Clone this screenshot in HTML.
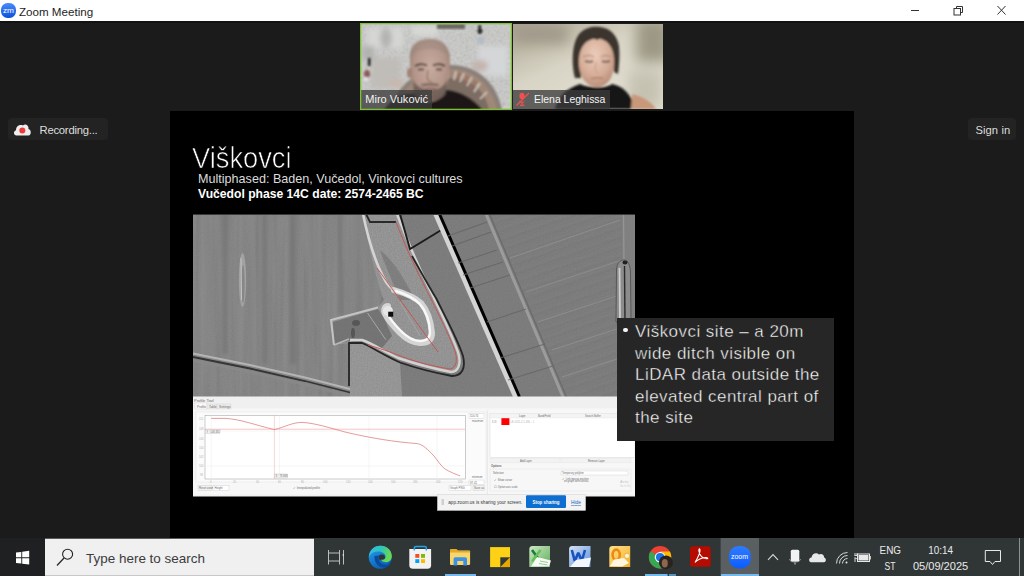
<!DOCTYPE html>
<html><head><meta charset="utf-8">
<style>
*{margin:0;padding:0;box-sizing:border-box}
html,body{width:1024px;height:576px;overflow:hidden;background:#1b1b1b;font-family:"Liberation Sans",sans-serif}
.abs{position:absolute}
#titlebar{left:0;top:0;width:1024px;height:21px;background:#fff}
#tline{left:0;top:21px;width:1024px;height:2px;background:#121212}
#zmicon{left:1px;top:3px;width:15px;height:15px;border-radius:50%;background:linear-gradient(160deg,#3d7bff,#0b4fe0)}
#zmicon span{position:absolute;left:2px;top:3px;color:#fff;font-size:7px;font-weight:bold;letter-spacing:-0.3px}
#ttext{left:19px;top:5px;font-size:11.6px;color:#1e1e1e}
#slide{left:170px;top:111px;width:684px;height:427px;background:#000}
#tile1{left:360px;top:23px;width:152px;height:87px;border:2px solid #7cc334;background:#b9b9b5;overflow:hidden}
#tile2{left:513px;top:24px;width:150px;height:85px;background:#bcb9ab;overflow:hidden}
.rec{left:8px;top:118px;width:100px;height:22px;border-radius:4px;background:#232323}
.sign{left:968px;top:118px;width:48px;height:22px;border-radius:4px;background:#232323}
#taskbar{left:0;top:538px;width:1024px;height:38px;background:#283135}
#startarea{left:0;top:538px;width:45px;height:38px;background:#202020}
#search{left:45px;top:539px;width:269px;height:37px;background:#f0f0f0}

.rec span{position:absolute;left:31.5px;top:5.5px;font-size:11.3px;letter-spacing:-0.25px;color:#dedede}
.sign span{position:absolute;left:7.5px;top:5.5px;font-size:11.2px;word-spacing:0.5px;color:#dedede}
#title{left:192px;top:142px;font-size:29px;color:#fff;white-space:nowrap;-webkit-text-stroke:0.7px #000;transform:scaleX(0.94);transform-origin:0 0}
#sub1{left:198px;top:172px;font-size:12.6px;color:#dcdcdc;white-space:nowrap}
#sub2{left:198px;top:187px;font-size:12.15px;color:#fff;font-weight:bold;white-space:nowrap}
#tbox{left:617px;top:318px;width:217px;height:123px;background:#262626}
#tbox .l{position:absolute;left:18px;font-size:17px;letter-spacing:0.45px;color:#fff;white-space:nowrap;-webkit-text-stroke:0.4px #262626}
#tbox .b{position:absolute;left:6px;top:9.5px;width:4.6px;height:4.6px;border-radius:50%;background:#f4f4f4}
</style></head><body>
<div id="titlebar" class="abs"></div>
<div id="tline" class="abs"></div>
<svg class="abs" style="left:0;top:2px" width="18" height="18" viewBox="0 2 18 18"><defs><linearGradient id="zmi" x1="0" y1="0" x2="0" y2="1"><stop offset="0" stop-color="#4a8cff"/><stop offset="1" stop-color="#0a4fd8"/></linearGradient></defs><rect x="1" y="3" width="15" height="15" rx="6.5" fill="url(#zmi)"/><text x="3" y="13.2" font-family="Liberation Sans" font-size="7.4" fill="#fff" textLength="11" lengthAdjust="spacingAndGlyphs">zm</text></svg>
<div id="ttext" class="abs">Zoom Meeting</div>
<svg class="abs" style="left:905px;top:0" width="119" height="21">
<line x1="6" y1="10.5" x2="14" y2="10.5" stroke="#333" stroke-width="1"/>
<rect x="49" y="8.5" width="6.5" height="6.5" fill="none" stroke="#333" stroke-width="1"/>
<path d="M51.5 8.5 V6.5 H57.5 V12.5 H55.5" fill="none" stroke="#333" stroke-width="1"/>
<path d="M92.5 6 L100.5 14.5 M100.5 6 L92.5 14.5" stroke="#333" stroke-width="1"/>
</svg>

<!--TILE1-->
<svg class="abs" style="left:360px;top:23px" width="152" height="87" viewBox="360 23 152 87">
<defs>
<filter id="bl1" x="-20%" y="-20%" width="140%" height="140%"><feGaussianBlur stdDeviation="1.2"/></filter>
<filter id="bl2" x="-20%" y="-20%" width="140%" height="140%"><feGaussianBlur stdDeviation="0.9"/></filter>
<filter id="bl3" x="-50%" y="-50%" width="200%" height="200%"><feGaussianBlur stdDeviation="2.5"/></filter>
<filter id="nz1" x="0" y="0" width="100%" height="100%"><feTurbulence type="fractalNoise" baseFrequency="0.35" numOctaves="3" seed="11"/><feColorMatrix type="saturate" values="0"/><feComponentTransfer><feFuncA type="linear" slope="0" intercept="0.3"/></feComponentTransfer></filter>
<radialGradient id="skin1" cx="0.5" cy="0.45" r="0.65"><stop offset="0" stop-color="#c8aca0"/><stop offset="0.6" stop-color="#b4968a"/><stop offset="1" stop-color="#8e7468"/></radialGradient>
</defs>
<rect x="360" y="23" width="152" height="87" fill="#c8c8c6"/>
<rect x="360" y="23" width="152" height="87" filter="url(#nz1)" opacity="0.6"/>
<g filter="url(#bl3)">
<rect x="367" y="28" width="36" height="20" fill="#d6d6d4"/>
<rect x="412" y="26" width="26" height="10" fill="#d8d8d6"/>
<rect x="478" y="46" width="30" height="30" fill="#d4d6d8"/>
<rect x="362" y="46" width="12" height="14" fill="#b2b2b0"/>
<ellipse cx="386" cy="38" rx="6" ry="10" fill="#b4b4b2"/>
<rect x="372" y="58" width="28" height="30" fill="#c0bcb8"/>
<ellipse cx="397" cy="84" rx="8" ry="5" fill="#c8b8b0"/>
<ellipse cx="480" cy="66" rx="8" ry="6" fill="#c4b4ac"/>
</g>
<rect x="437" y="24" width="28" height="5" fill="#6a6664" filter="url(#bl1)"/>
<g filter="url(#bl2)">
<rect x="478.5" y="25" width="2.5" height="9" fill="#1a1a1a"/>
<ellipse cx="480" cy="31" rx="2.8" ry="1.8" fill="#1a1a1a"/>
<ellipse cx="480.5" cy="40.5" rx="3.8" ry="3.5" fill="#b4bcc8"/>
<rect x="368" y="58" width="2.5" height="8" fill="#1e1e1e"/>
<ellipse cx="367" cy="74" rx="3" ry="4" fill="#8a5a58"/>
<ellipse cx="366" cy="79" rx="2.5" ry="2" fill="#e4e4e4"/>
</g>
<g filter="url(#bl2)">
<path d="M391 110 C394 90 416 66 450 65 C482 65 498 88 502 110 Z" fill="#8a807a"/>
<path d="M395 110 C398 93 419 70 450 69 C478 69 493 90 497 110 Z" fill="#a08878"/>
<path d="M403 110 C406 97 424 79 450 78 C474 78 486 94 489 110 Z" fill="#7c6c62"/>
<path d="M456 71 L454 80 M464 73 L460 82 M472 77 L467 86 M480 83 L474 92 M487 92 L480 99 M447 70 L447 79" stroke="#ddd4cc" stroke-width="1.4"/>
<path d="M460 73 L457 81 M468 76 L464 84 M476 81 L470 89" stroke="#9a6858" stroke-width="1.8"/>
</g>
<g filter="url(#bl2)">
<path d="M384 110 C390 100 402 92 416 94 L446 90 C462 92 474 100 482 110 Z" fill="#1a1818"/>
<path d="M410 60 C409 45 418 39 430 39 C443 39 450 47 450 60 C450 74 448 86 444 94 C440 100 434 102 429 102 C423 102 418 99 415 93 C411 84 410 72 410 60 Z" fill="url(#skin1)"/>
<path d="M410 58 C409 45 418 39 430 39 C443 39 450 47 450 58 C445 52 438 49 430 49 C420 49 414 52 410 58 Z" fill="#9a887e" opacity="0.45"/>
<ellipse cx="409.5" cy="73" rx="2.5" ry="5" fill="#a08274"/>
<path d="M413 80 C418 92 442 94 447 80 L446 94 C441 103 419 103 414 94 Z" fill="#62544e" opacity="0.75"/>
<path d="M421 84 C426 82.5 434 82.5 439 84 L438 86.5 C434 85.5 426 85.5 422 86.5 Z" fill="#5a4a44" opacity="0.6"/>
<path d="M415 66 C419 63.5 423 63.5 427 65.5 M433 65.5 C437 63.5 441 63.5 445 66" stroke="#3a2c28" stroke-width="1.8" fill="none"/>
<path d="M418 69.5 L424 69.5 M436 69.5 L442 69.5" stroke="#2e2220" stroke-width="1.5"/>
<path d="M428 70 C427 77 426 81 432 82" stroke="#8a6a5c" stroke-width="1.1" fill="none"/>
<path d="M425 89 C428 88 433 88 436 89" stroke="#8a5a50" stroke-width="1.4" fill="none"/>
</g>
<rect x="361" y="90" width="71" height="19" fill="#3c3c3c" fill-opacity="0.78"/>
<text x="365.3" y="103.4" font-family="Liberation Sans" font-size="11.5" fill="#f4f4f4" textLength="62.7" lengthAdjust="spacingAndGlyphs">Miro Vuković</text>
<rect x="360.6" y="23.6" width="150.8" height="85.8" fill="none" stroke="#7cc232" stroke-width="1.3"/>
</svg>
<!--/TILE1-->

<!--TILE2-->
<svg class="abs" style="left:513px;top:24px" width="150" height="85" viewBox="513 24 150 85">
<defs>
<linearGradient id="wall2" x1="0" y1="0" x2="0.8" y2="1"><stop offset="0" stop-color="#aaa48f"/><stop offset="0.45" stop-color="#d8d4c5"/><stop offset="1" stop-color="#e6e2d6"/></linearGradient>
<radialGradient id="skin2" cx="0.45" cy="0.35" r="0.7"><stop offset="0" stop-color="#ecccbc"/><stop offset="0.6" stop-color="#d6ae98"/><stop offset="1" stop-color="#b48a76"/></radialGradient>
<filter id="b2" x="-20%" y="-20%" width="140%" height="140%"><feGaussianBlur stdDeviation="0.9"/></filter>
<filter id="b4" x="-50%" y="-50%" width="200%" height="200%"><feGaussianBlur stdDeviation="7"/></filter>
</defs>
<rect x="513" y="24" width="150" height="85" fill="url(#wall2)"/>
<g filter="url(#b4)">
<rect x="636" y="18" width="34" height="44" fill="#9c9884"/>
<rect x="628" y="70" width="35" height="39" fill="#c6c2b2"/>
<rect x="513" y="24" width="55" height="20" fill="#a0998a"/>
</g>
<g filter="url(#b2)">
<path d="M575 78 C571 62 572 42 580 33 C586 27 594 26 600 27 C610 28 617 35 619 46 C620 56 619 66 618 74 L614 72 C613 60 612 48 597 40 C583 46 581 60 581 78 Z" fill="#3b342e"/>
<path d="M597 87 C587 87 580 78 579 66 C578 52 582 40 597 38 C611 40 615 52 614 66 C613 78 607 87 597 87 Z" fill="url(#skin2)"/>
<path d="M580 40 C585 33 592 31 597 34 C602 31 610 33 615 40 C610 37 603 37 597 40 C591 37 585 37 580 40 Z" fill="#3b342e"/>
<path d="M583 57 C587 55 591 55 594 57 M601 57 C604 55 608 55 611 57" stroke="#b08a78" stroke-width="1.2" fill="none"/>
<path d="M585 61 C588 62 591 62 593 61 M602 61 C604 62 607 62 610 61" stroke="#5a443a" stroke-width="1.4" fill="none"/>
<path d="M596 62 C595 68 594 72 598 73" stroke="#c09480" stroke-width="0.9" fill="none"/>
<path d="M591 78.5 C595 77.5 600 77.5 603 78.5" stroke="#b07a6e" stroke-width="1.5" fill="none"/>
<path d="M555 109 C558 96 566 89 580 84 C588 88 606 89 612 84 C622 86 628 92 632 100 L632 109 Z" fill="#191717"/>
<path d="M631 109 L632 94 C642 96 652 102 656 109 Z" fill="#c8987a"/>
</g>
<rect x="513" y="90" width="97" height="19" fill="#3c3c3c" fill-opacity="0.78"/>
<g stroke="#f05050" fill="#f05050">
<ellipse cx="522" cy="96" rx="2.6" ry="3.2" stroke="none"/>
<path d="M519.5 99 C519 103 525 103 524.5 99 L524.5 101 C524 104 520 104 519.5 101 Z" stroke="none"/>
<path d="M522 103 V105 M520 105.3 H524.5" stroke-width="1.2" fill="none"/>
<path d="M516.5 105.5 L529 93" stroke-width="1.3"/>
</g>
<text x="534" y="103.4" font-family="Liberation Sans" font-size="11.5" fill="#f4f4f4" textLength="71.4" lengthAdjust="spacingAndGlyphs">Elena Leghissa</text>
</svg>
<!--/TILE2-->

<div class="abs rec"><svg style="position:absolute;left:5px;top:5px" width="19" height="13" viewBox="0 0 19 13"><path d="M3.5 12.5 C0.5 12.5 0 8 3 7.2 C3 3 7 1 10 2.5 C12 0.5 16 2 15.5 6 C18.5 6.5 18.5 12.5 15.5 12.5 Z" fill="#eee"/><circle cx="9.3" cy="7.5" r="3" fill="#f03a3a"/></svg><span>Recording...</span></div>
<div class="abs sign"><span>Sign in</span></div>
<div id="slide" class="abs"></div>
<!--LIDAR-->
<svg class="abs" style="left:193px;top:214px" width="442" height="183" viewBox="193 214 442 183">
<defs>
<filter id="lb" x="-10%" y="-10%" width="120%" height="120%"><feGaussianBlur stdDeviation="0.6"/></filter>
<filter id="lb2" x="-10%" y="-10%" width="120%" height="120%"><feGaussianBlur stdDeviation="1.5"/></filter>
<filter id="vs" x="0" y="0" width="100%" height="100%"><feTurbulence type="fractalNoise" baseFrequency="0.18 0.008" numOctaves="2" seed="5"/><feColorMatrix type="saturate" values="0"/><feComponentTransfer><feFuncA type="linear" slope="0" intercept="0.25"/></feComponentTransfer></filter>
<filter id="nz" x="0" y="0" width="100%" height="100%"><feTurbulence type="fractalNoise" baseFrequency="0.8" numOctaves="2" seed="7"/><feColorMatrix type="saturate" values="0"/><feComponentTransfer><feFuncA type="linear" slope="0" intercept="0.35"/></feComponentTransfer></filter>
<clipPath id="encl"><path d="M366 214 L397 214 C405 235 415 258 425 280 C435 300 450 330 458 352 C462 364 458 372 451 372 C430 368 410 362 398 358 C380 352 364 347 350 343 L333 345 L331 320 L379 306 L384 300 C378 285 370 255 363 214 Z"/></clipPath>
<clipPath id="lf"><path d="M193 214 L364 214 C368 238 376 265 386 282 L379 307 L331 320 L334 345 L350 343 L352 397 L193 397 Z"/></clipPath>
<pattern id="diag" patternUnits="userSpaceOnUse" width="40" height="9" patternTransform="rotate(-19)"><line x1="0" y1="1" x2="40" y2="1" stroke="#8c8c8c" stroke-width="1"/><line x1="0" y1="4" x2="40" y2="4" stroke="#6a6a6a" stroke-width="0.8"/></pattern>
<clipPath id="rf"><path d="M490 214 L635 214 L635 397 L567 397 Z"/></clipPath>
<clipPath id="botl"><path d="M350 344 L362 344 L400 363 L402 397 L350 397 Z"/></clipPath>
</defs>
<rect x="193" y="214" width="442" height="183" fill="#767676"/>
<rect x="193" y="214" width="441" height="183" filter="url(#vs)" opacity="0.6" clip-path="url(#lf)"/>
<rect x="193" y="214" width="441" height="183" filter="url(#nz)" opacity="0.25"/>
<g filter="url(#lb2)" opacity="0.6">
<rect x="204" y="214" width="4" height="140" fill="#878787"/>
<rect x="222" y="214" width="6" height="140" fill="#737373"/>
<rect x="250" y="214" width="4" height="150" fill="#858585"/>
<rect x="262" y="214" width="5" height="150" fill="#747474"/>
<rect x="290" y="214" width="6" height="150" fill="#727272"/>
<rect x="312" y="214" width="5" height="110" fill="#868686"/>
<rect x="338" y="214" width="4" height="100" fill="#737373"/>
<rect x="352" y="214" width="5" height="90" fill="#858585"/>
</g>
<g filter="url(#lb)">
<!-- left oval -->
<ellipse cx="242.5" cy="280" rx="3.6" ry="27" fill="#a2a2a2"/>
<ellipse cx="243" cy="284" rx="1.6" ry="19" fill="#878787"/>
<path d="M241 258 L241.5 300" stroke="#c4c4c4" stroke-width="1"/>
<!-- long left ditch -->
<path d="M193 353.5 L250 365 L305 377.5 L350 389 L370 397" stroke="#b4b4b4" stroke-width="2" fill="none"/>
<path d="M193 357 L250 368.5 L305 381 L350 392.5 L365 399" stroke="#353535" stroke-width="1.8" fill="none"/>
<path d="M193 360.5 L250 372 L305 384.5 L350 396" stroke="#8a8a8a" stroke-width="2.6" fill="none" opacity="0.8"/>
<!-- enclosure interior -->
<g clip-path="url(#encl)">
<rect x="320" y="214" width="150" height="170" fill="#8b8b8b"/>
<rect x="320" y="214" width="150" height="170" filter="url(#nz)" opacity="0.55"/>
<path d="M380 250 C395 262 405 280 415 300 L400 300 C392 280 385 265 380 250 Z" fill="#6a6a6a" opacity="0.5"/>
<path d="M333 322 L378 309 L384 318 L392 336 L382 348 L350 341 L334 344 Z" fill="#6c6c6c" opacity="0.8"/>
<ellipse cx="356" cy="323" rx="4" ry="3" fill="#444" opacity="0.6"/>
<ellipse cx="353" cy="333" rx="2" ry="5" fill="#3a3a3a" opacity="0.5"/>
</g>
<g clip-path="url(#botl)">
<rect x="350" y="340" width="60" height="60" fill="#8e8e8e"/>
<rect x="350" y="340" width="60" height="60" filter="url(#nz)" opacity="0.5"/>
</g>
<!-- left extension edges -->
<path d="M334 345 L331 320 L378 307.5" stroke="#c4c4c4" stroke-width="2" fill="none"/>
<path d="M334 345 L349 339" stroke="#b8b8b8" stroke-width="1.5" fill="none"/>
<!-- outer left bright bank -->
<path d="M363 214 C368 238 376 265 386 282 C390 288 394 291 398 292" stroke="#d4d4d4" stroke-width="2.6" fill="none"/>
<path d="M366 214 L370 222 L396 222" stroke="#2c2c2c" stroke-width="1.8" fill="none"/>
<!-- loop bright -->
<path d="M394 290 C404 293 415 297 421 303 C427 310 431 322 432 333 C432 340 428 343 420 343 C412 343 405 338 400 333 C394 327 388 320 385 314 C383 309 385 306 388 306" stroke="#d4d4d4" stroke-width="6" fill="none" stroke-linecap="round"/>
<path d="M396 291 C405 294 414 298 420 304 C426 311 429.5 322 430 332 C430 338 427 341 420 341 C413 341 406 336 401 331 C395 325 390 319 387 313" stroke="#f8f8f8" stroke-width="2.4" fill="none" stroke-linecap="round"/>
<circle cx="388" cy="311" r="5" fill="#e6e6e6"/>
<rect x="388.2" y="311.7" width="5" height="5" fill="#0e0e0e"/>
<path d="M400 302 L420 336" stroke="#a8a8a8" stroke-width="0.8"/>
<path d="M367.5 313 L385.8 339.7" stroke="#b4b4b4" stroke-width="0.8"/>
<!-- enclosure outer right bank + dark ditch -->
<path d="M397 214 C405 235 415 258 425 280 C435 300 450 330 458 352 C462 364 458 372 451 372 C430 368 410 362 398 358 C385 352 372 343 362 340 L350 340" stroke="#d2d2d2" stroke-width="2.4" fill="none"/>
<path d="M412 256 C420 270 428 285 436 298 C448 322 458 340 463 356 C466 368 462 376 452 376 C430 372 410 366 400 362.5 C385 356 370 346 362 343 L349 343 L349 386" stroke="#262626" stroke-width="1.8" fill="none"/>
<!-- red profile lines -->
<path d="M396 222 C404 243 414 265 423 283 C433 303 447 330 455 351 C458 361 456 368 450 369 C430 366 410 360 398 355 C385 350 375 347 368 345" stroke="#c8504c" stroke-width="0.9" fill="none"/>
<path d="M377 268 L438 352" stroke="#c8504c" stroke-width="0.9" fill="none"/>
<!-- field boundary -->
<path d="M400 214 L410 249 L443 229" stroke="#1c1c1c" stroke-width="1.9" fill="none"/>
<!-- main road black line -->
<path d="M436 214 L516 397" stroke="#d4d4d4" stroke-width="5.5" fill="none"/>
<path d="M439.5 214 L519.5 397" stroke="#060606" stroke-width="3" fill="none"/>
<!-- parallel ridge -->
<path d="M486 214 L563 397" stroke="#9c9c9c" stroke-width="3" fill="none"/>
<path d="M489.5 214 L566.5 397" stroke="#6a6a6a" stroke-width="1.2" fill="none"/>
<!-- stripes between road & ridge -->
<g stroke="#646464" stroke-width="1.2" opacity="0.8">
<path d="M448 236 L487 222"/><path d="M452 246 L491 232"/><path d="M458 263 L497 250"/>
<path d="M463 275 L503 262"/><path d="M470 288 L510 275"/><path d="M487 322 L526 309"/>
<path d="M500 358 L545 344"/><path d="M508 380 L553 366"/>
</g>
<rect x="480" y="214" width="155" height="183" fill="url(#diag)" opacity="0.22" clip-path="url(#rf)"/>
<!-- faint right field lines -->
<g stroke="#8e8e8e" stroke-width="1.3" opacity="0.9">
<path d="M510 258 L620 220"/><path d="M526 292 L634 256"/><path d="M538 322 L620 295"/>
<path d="M552 350 L620 328"/><path d="M562 377 L620 358"/>
</g>
<!-- right edge band & oval -->
<rect x="622" y="214" width="13" height="183" fill="#808080"/>
<path d="M623.5 214 L624 262" stroke="#959595" stroke-width="1.2"/>
<path d="M616 322 L616.5 270 C617 263 620 260 624 260 C628 260 630 265 630.5 272 L631 322 Z" fill="#8c8c8c" stroke="#4a4a4a" stroke-width="0.8"/>
<path d="M619.5 268 L620 322" stroke="#cfcfcf" stroke-width="1.8"/>
<path d="M624.5 266 L625 322" stroke="#2a2a2a" stroke-width="1.4"/>
<ellipse cx="625" cy="262.5" rx="2.5" ry="2" fill="#222"/>
</g>
<rect x="193" y="214" width="442" height="1" fill="#3a3a3a"/>
</svg>
<!--/LIDAR-->
<!--PANEL-->
<svg class="abs" style="left:193px;top:396px" width="442" height="101" viewBox="193 396 442 101" font-family="Liberation Sans">
<rect x="193" y="396.5" width="442" height="100" fill="#f0f0f0"/>
<text x="194" y="402" font-size="4" fill="#707070">Profile Tool</text>
<rect x="193" y="408.5" width="442" height="86" fill="#f7f7f7"/>
<rect x="195" y="403" width="12" height="6" fill="#fafafa" stroke="#cfcfcf" stroke-width="0.4"/>
<rect x="207" y="404" width="10" height="5" fill="#ececec" stroke="#cfcfcf" stroke-width="0.4"/>
<rect x="217" y="404" width="14" height="5" fill="#ececec" stroke="#cfcfcf" stroke-width="0.4"/>
<text x="197" y="407.8" font-size="3.2" fill="#6a6a6a">Profile</text>
<text x="209" y="407.8" font-size="3.2" fill="#6a6a6a">Table</text>
<text x="219" y="407.8" font-size="3.2" fill="#6a6a6a">Settings</text>
<rect x="196" y="412" width="290" height="70" fill="#fbfbfb" stroke="#e2e2e2" stroke-width="0.4"/>
<rect x="205" y="415.3" width="260.3" height="63.7" fill="#fff" stroke="#9a9a9a" stroke-width="0.5"/>
<g stroke="#e6e6e6" stroke-width="0.4">
<line x1="211.2" y1="415.5" x2="211.2" y2="479"/><line x1="279.5" y1="415.5" x2="279.5" y2="479"/><line x1="369" y1="415.5" x2="369" y2="479"/><line x1="437" y1="415.5" x2="437" y2="479"/>
<line x1="205" y1="466" x2="465" y2="466"/><line x1="205" y1="431" x2="465" y2="431"/>
</g>
<g font-size="2.6" fill="#b0b0b0">
<text x="199" y="420">110</text><text x="199" y="430">108</text><text x="199" y="440">106</text><text x="199" y="449">104</text><text x="199" y="458">102</text><text x="199" y="467">100</text><text x="200" y="476">98</text>
<text x="210" y="483">0</text><text x="233" y="483">20</text><text x="256" y="483">40</text><text x="278" y="483">60</text><text x="301" y="483">80</text><text x="323" y="483">100</text><text x="346" y="483">120</text><text x="368" y="483">140</text><text x="391" y="483">160</text><text x="413" y="483">180</text><text x="436" y="483">200</text><text x="458" y="483">220</text>
</g>
<line x1="205" y1="429.2" x2="465" y2="429.2" stroke="#f4a0a0" stroke-width="0.6"/>
<line x1="274.4" y1="415.5" x2="274.4" y2="479" stroke="#f2a8a8" stroke-width="0.5"/>
<path d="M211.2 418.4 L225 418.4 C240 419 255 425 274.4 429.6 C285 427 292 422.5 302 422.4 C315 423 330 428 345 432 C370 438 395 442 417.4 443.6 C424 445 428 450 434 456 C438 461 441 466 445 469 C450 472 455 474 460 475.8" stroke="#d87070" stroke-width="0.7" fill="none"/>
<rect x="205.5" y="429.5" width="14.5" height="3.8" fill="#f4f4f4" stroke="#aaa" stroke-width="0.3"/>
<text x="206.5" y="432.6" font-size="2.6" fill="#6a6a6a">Y : 108.331</text>
<rect x="274.6" y="474" width="13" height="4" fill="#f4f4f4" stroke="#aaa" stroke-width="0.3"/>
<text x="275.5" y="477.3" font-size="2.6" fill="#6a6a6a">X : 73.968</text>
<rect x="469" y="413.7" width="15" height="4.5" fill="#fff" stroke="#bbb" stroke-width="0.3"/>
<text x="470" y="417.2" font-size="2.8" fill="#6a6a6a">110.74</text>
<text x="472" y="421.7" font-size="2.6" fill="#707070">maximum</text>
<text x="472" y="478" font-size="2.6" fill="#707070">minimum</text>
<rect x="469" y="480" width="15" height="4.5" fill="#fff" stroke="#bbb" stroke-width="0.3"/>
<text x="470" y="483.5" font-size="2.8" fill="#6a6a6a">97.41</text>
<rect x="198" y="485.5" width="14" height="5" fill="#f2f2f2" stroke="#bbb" stroke-width="0.3"/>
<text x="199" y="489.2" font-size="2.8" fill="#6a6a6a">Reset zoom</text>
<rect x="213" y="485.5" width="16" height="5" fill="#fff" stroke="#bbb" stroke-width="0.3"/>
<text x="214.5" y="489.2" font-size="2.8" fill="#6a6a6a">Height</text>
<text x="293" y="489.2" font-size="2.8" fill="#6a6a6a">✓ Interpolated profile</text>
<rect x="449" y="485.5" width="22" height="5" fill="#fff" stroke="#bbb" stroke-width="0.3"/>
<text x="450" y="489.2" font-size="2.8" fill="#6a6a6a">Graph   PNG</text>
<rect x="473" y="485.5" width="11.5" height="5" fill="#f2f2f2" stroke="#bbb" stroke-width="0.3"/>
<text x="474" y="489.2" font-size="2.8" fill="#6a6a6a">Save as</text>
<line x1="487.4" y1="410" x2="487.4" y2="494" stroke="#dadada" stroke-width="0.5"/>
<rect x="490" y="413.4" width="145" height="44" fill="#fff" stroke="#d0d0d0" stroke-width="0.4"/>
<rect x="490" y="413.4" width="145" height="4.6" fill="#f4f4f4" stroke="#ddd" stroke-width="0.3"/>
<text x="519" y="417" font-size="2.6" fill="#6a6a6a">Layer</text>
<text x="538" y="417" font-size="2.6" fill="#6a6a6a">Band/Field</text>
<text x="585" y="417" font-size="2.6" fill="#6a6a6a">Search Buffer</text>
<text x="492" y="423" font-size="2.8" fill="#6a6a6a">1 ☰</text>
<rect x="501.4" y="418.2" width="8" height="6.8" fill="#ff0000"/>
<text x="510.5" y="423" font-size="2.6" fill="#b0b0b0">LE-1011-2-1-186...  1</text>
<rect x="490" y="458.5" width="70" height="4.4" fill="#f2f2f2" stroke="#ddd" stroke-width="0.3"/>
<rect x="561" y="458.5" width="70" height="4.4" fill="#f2f2f2" stroke="#ddd" stroke-width="0.3"/>
<text x="520" y="461.8" font-size="2.6" fill="#6a6a6a">Add Layer</text>
<text x="588" y="461.8" font-size="2.6" fill="#6a6a6a">Remove Layer</text>
<text x="491" y="467.4" font-size="2.8" fill="#6a6a6a" font-weight="bold">Options</text>
<rect x="490" y="469" width="141" height="22" fill="#f7f7f7" stroke="#e0e0e0" stroke-width="0.4"/>
<text x="493" y="474" font-size="2.6" fill="#6a6a6a">Selection</text>
<rect x="561" y="471" width="67" height="4" fill="#fff" stroke="#bbb" stroke-width="0.3"/>
<text x="562" y="474.2" font-size="2.6" fill="#6a6a6a">Temporary polyline</text>
<text x="494" y="481" font-size="2.6" fill="#6a6a6a">✓ Show cursor</text>
<text x="494" y="487.5" font-size="2.6" fill="#6a6a6a">☐ Option axis scale</text>
<text x="562" y="479.6" font-size="2.6" fill="#6a6a6a">✓ Link mouse position</text>
<text x="564" y="482.4" font-size="2.6" fill="#6a6a6a">on graph with canvas</text>
<text x="620" y="482.5" font-size="4" fill="#c8c8c8">Activ</text>
<text x="620" y="486.5" font-size="2.6" fill="#cfcfcf">Go to Se</text>
</svg>
<!--/PANEL-->
<!--SHARE-->
<svg class="abs" style="left:437px;top:494px" width="149" height="17" viewBox="437 494 149 17" font-family="Liberation Sans">
<rect x="437.5" y="494.3" width="148" height="16" fill="#f3f3f3" stroke="#d8d8d8" stroke-width="0.6"/>
<rect x="441.5" y="499" width="2.5" height="6" fill="#d0d0d0"/>
<text x="448.3" y="504.3" font-size="5.6" fill="#333" textLength="74" lengthAdjust="spacingAndGlyphs">app.zoom.us is sharing your screen.</text>
<rect x="526" y="495.3" width="40" height="12.7" rx="1.2" fill="#0e6fd0"/>
<text x="532.5" y="503.8" font-size="5.3" fill="#fff" font-weight="bold" textLength="27" lengthAdjust="spacingAndGlyphs">Stop sharing</text>
<text x="571" y="504" font-size="5.8" fill="#1a5fb4" textLength="10" lengthAdjust="spacingAndGlyphs">Hide</text>
<line x1="571" y1="505.5" x2="581" y2="505.5" stroke="#1a5fb4" stroke-width="0.5"/>
</svg>
<!--/SHARE-->
<div id="title" class="abs">Viškovci</div>
<div id="sub1" class="abs">Multiphased: Baden, Vučedol, Vinkovci cultures</div>
<div id="sub2" class="abs">Vučedol phase 14C date: 2574-2465 BC</div>
<div id="tbox" class="abs"><span class="b"></span>
<span class="l" style="top:4px">Viškovci site – a 20m</span>
<span class="l" style="top:25.5px">wide ditch visible on</span>
<span class="l" style="top:47px">LiDAR data outside the</span>
<span class="l" style="top:68.5px">elevated central part of</span>
<span class="l" style="top:90px">the site</span>
</div>
<!--TASKBAR-->
<svg class="abs" style="left:0;top:538px" width="1024" height="38" viewBox="0 538 1024 38" font-family="Liberation Sans">
<defs>
<linearGradient id="edg" x1="0" y1="0" x2="0.6" y2="1"><stop offset="0" stop-color="#2aa0e8"/><stop offset="0.6" stop-color="#1279d0"/><stop offset="1" stop-color="#0c5cb0"/></linearGradient>
<linearGradient id="edg2" x1="0" y1="0" x2="1" y2="0.3"><stop offset="0" stop-color="#35b8f0"/><stop offset="0.55" stop-color="#2ec6b8"/><stop offset="1" stop-color="#6ad850"/></linearGradient>
<linearGradient id="zmg" x1="0" y1="0" x2="0" y2="1"><stop offset="0" stop-color="#2f7bff"/><stop offset="1" stop-color="#0b5cff"/></linearGradient>
<linearGradient id="xlg" x1="0" y1="0" x2="1" y2="1"><stop offset="0" stop-color="#cfe8c8"/><stop offset="1" stop-color="#5fae5a"/></linearGradient>
<linearGradient id="wdg" x1="0" y1="0" x2="1" y2="1"><stop offset="0" stop-color="#d7e4f6"/><stop offset="1" stop-color="#5c8fd6"/></linearGradient>
<linearGradient id="olg" x1="0" y1="0" x2="1" y2="1"><stop offset="0" stop-color="#ffe28a"/><stop offset="1" stop-color="#f2b02a"/></linearGradient>
</defs>
<rect x="0" y="538" width="1024" height="38" fill="#303636"/>
<rect x="0" y="538" width="45" height="38" fill="#1f2021"/>
<!-- windows logo -->
<g fill="#fff">
<path d="M16 552.6 L21.3 551.9 L21.3 557.3 L16 557.3 Z"/>
<path d="M22.2 551.8 L29.2 550.8 L29.2 557.3 L22.2 557.3 Z"/>
<path d="M16 558.2 L21.3 558.2 L21.3 563.6 L16 563 Z"/>
<path d="M22.2 558.2 L29.2 558.2 L29.2 564.6 L22.2 563.7 Z"/>
</g>
<rect x="45" y="538.8" width="269" height="37.2" fill="#f0f0f0"/>
<rect x="45" y="575" width="269" height="1" fill="#c8c8c8"/>
<circle cx="67.6" cy="554.2" r="5" fill="none" stroke="#222" stroke-width="1.1"/>
<line x1="64" y1="558" x2="57" y2="565.5" stroke="#222" stroke-width="1.2"/>
<text x="86" y="562.9" font-size="13" fill="#3c3c3c" textLength="119" lengthAdjust="spacingAndGlyphs">Type here to search</text>
<!-- task view -->
<g stroke="#bdbdbd" stroke-width="1" fill="none">
<line x1="328.5" y1="550" x2="328.5" y2="564.5"/><line x1="339.5" y1="550" x2="339.5" y2="564.5"/>
<line x1="328.5" y1="553" x2="339.5" y2="553"/><line x1="328.5" y1="561" x2="339.5" y2="561"/>
<line x1="343.5" y1="550" x2="343.5" y2="564.5"/>
</g>
<circle cx="343.3" cy="555" r="0.8" fill="#eee"/>
<!-- edge -->
<circle cx="380.3" cy="557.3" r="11.5" fill="url(#edg)"/>
<ellipse cx="381.8" cy="557.6" rx="3.2" ry="3" fill="#303636"/>
<path d="M374.5 556 C374 562 378 567.5 384 567.5 C387 567.5 389.5 566 390.5 563.5 C388.5 565 385.5 565.3 383 564.3 C379.5 562.8 377.8 559.5 378.8 555.5 Z" fill="#0b4a96"/>
<path d="M368.8 557.5 C368.8 550.5 374 545.8 380.5 545.8 C387 545.8 391.8 550.5 391.8 556 C391.8 560 389 562.3 385.8 562.3 C383.2 562.3 381.5 561 380.8 559.5 C383.5 560.5 386 559 385.5 556 C384.8 552.5 380 550.8 375.5 551.8 C372 552.6 369.5 554.8 368.8 557.5 Z" fill="url(#edg2)"/>
<!-- store -->
<path d="M409.3 549 H431.1 V565.5 C431.1 567.5 429.6 568.8 427.6 568.8 H412.8 C410.8 568.8 409.3 567.5 409.3 565.5 Z" fill="#f2f2f2"/>
<path d="M414.3 550.5 V548 C414.3 547 415 546.6 416 546.6 H424.8 C425.8 546.6 426.3 547 426.3 548 V550.5" stroke="#1ea8ea" stroke-width="1.5" fill="none"/>
<rect x="415.3" y="554" width="4" height="3.8" fill="#f25022"/><rect x="421" y="554" width="4" height="3.8" fill="#7fba00"/>
<rect x="415.3" y="559.2" width="4" height="3.8" fill="#00a4ef"/><rect x="421" y="559.2" width="4" height="3.8" fill="#ffb900"/>
<!-- explorer -->
<rect x="450" y="550.5" width="20.1" height="14.4" rx="0.8" fill="#f9d56a"/>
<path d="M450 552.5 V550 C450 549.5 450.5 549.1 451 549.1 H456.5 L458.5 551 H470 V552.5 Z" fill="#e4a82a"/>
<path d="M453.6 565.6 V559 C453.6 558 454.4 557.2 455.4 557.2 H465.2 C466.2 557.2 467 558 467 559 V565.6 H463.3 V561 H457.3 V565.6 Z" fill="#3a92e4"/>
<rect x="445" y="574" width="31" height="2" fill="#76b9ed"/>
<!-- sticky notes -->
<rect x="490.1" y="547.1" width="19.9" height="20" fill="#fcd116"/>
<path d="M500.3 557.3 H510 V567.1 H500.3 Z" fill="#333838"/>
<path d="M510 557.3 V567.1 H500.3 Z" fill="#e8a800"/>
<!-- excel -->
<path d="M532.3 545.9 H550 V567 H529.3 V548.9 C529.3 547.2 530.6 545.9 532.3 545.9 Z" fill="url(#xlg)"/>
<path d="M532 550 L540.5 561.5" stroke="#1e7a34" stroke-width="2.6"/>
<path d="M540.5 550 L532 561.5" stroke="#62c05a" stroke-width="2.4"/>
<path d="M537 557 L551 560.5 L549 566.5 L531 566.5 Z" fill="#f6fbf4"/>
<path d="M540 561 L548 562.5 M539 563.5 L547.5 565" stroke="#6cb86c" stroke-width="0.7"/>
<!-- word -->
<path d="M572.1 546 H590.5 V567 H569.1 V549 C569.1 547.3 570.4 546 572.1 546 Z" fill="url(#wdg)"/>
<path d="M571.8 550 L574.8 561 L578.3 552.8 L581.8 561 L585 550" stroke="#1652c0" stroke-width="2.6" fill="none" stroke-linejoin="bevel"/>
<path d="M576 560 L591 557.5 L589 567 L570 567 Z" fill="#f4f7fc"/>
<!-- outlook -->
<path d="M612.3 545.9 H630.2 V567 H609.3 V548.9 C609.3 547.2 610.6 545.9 612.3 545.9 Z" fill="url(#olg)"/>
<ellipse cx="616.2" cy="554.8" rx="3.6" ry="5.2" fill="none" stroke="#ec8a10" stroke-width="2.6"/>
<path d="M610 566 L614 559.5 L624 558 L629 563 L622 566.5 Z" fill="#fff6e0"/>
<circle cx="627" cy="555.8" r="2.6" fill="#fff1c8" stroke="#e8a030" stroke-width="0.6"/>
<!-- chrome -->
<circle cx="660.1" cy="557.2" r="11.2" fill="#ea4335"/>
<path d="M660.1 557.2 L650.4 551.6 A11.2 11.2 0 0 0 654.5 566.9 Z" fill="#34a853"/>
<path d="M660.1 557.2 L654.5 566.9 A11.2 11.2 0 0 0 671.3 557.2 Z" fill="#34a853"/>
<path d="M660.1 557.2 L671.3 557.2 A11.2 11.2 0 0 0 669.8 551.6 L660.1 551.6 Z" fill="#fbbc04"/>
<circle cx="660.1" cy="557.2" r="5.3" fill="#fff"/>
<circle cx="660.1" cy="557.2" r="4.1" fill="#1a73e8"/>
<circle cx="665.9" cy="562.4" r="7" fill="#2a221e"/>
<ellipse cx="664.8" cy="563.2" rx="3" ry="4.2" fill="#8e6650"/>
<rect x="645" y="574" width="22.6" height="2" fill="#76b9ed"/><rect x="669" y="574" width="7" height="2" fill="#5a8fb8"/>
<!-- acrobat -->
<rect x="690" y="546.3" width="20.7" height="20.4" rx="2.5" fill="#b40c00"/>
<path d="M695 562.5 C697 559 700.5 553 700 549.8 C699.5 548 698.5 549 699 551.5 C700 556 703.5 558.5 706.5 558.8 C708.5 559 708 557.3 705.5 557.5 C701.5 557.8 696.5 560.5 695 562.5 Z" fill="none" stroke="#fff" stroke-width="1.1"/>
<!-- zoom active -->
<rect x="720.6" y="538" width="38.4" height="38" fill="#5a5f61"/>
<rect x="729" y="546" width="21.8" height="22.4" rx="9.5" fill="url(#zmg)"/>
<text x="731" y="559.2" font-size="6.4" fill="#fff" textLength="17" lengthAdjust="spacingAndGlyphs">zoom</text>
<rect x="721" y="574" width="38" height="2" fill="#76b9ed"/>
<!-- chevron -->
<path d="M768 559.8 L773 554.5 L778 559.8" stroke="#d8d8d8" stroke-width="1.1" fill="none"/>
<!-- mic -->
<rect x="790.8" y="549.7" width="8.5" height="12" rx="1.5" fill="#f2f2f2"/>
<path d="M789.5 559 C789.5 563 800.5 563 800.5 559" stroke="#aaa" stroke-width="0.8" fill="none"/>
<line x1="795" y1="562.5" x2="795" y2="564.6" stroke="#ddd" stroke-width="0.9"/>
<!-- onedrive -->
<path d="M811 562.2 C808.5 562 808.5 557.5 811.5 557.5 C812 553.5 816.5 552 819 554.5 C821 553 824.5 554.5 824 557.5 C826.5 558 826.5 562.2 824 562.2 Z" fill="#e8e8e8"/>
<!-- wifi -->
<g stroke="#d8d8d8" stroke-width="1" fill="none">
<path d="M836.5 563.5 A11 11 0 0 1 847.5 552.5"/>
<path d="M839.5 563.5 A8 8 0 0 1 847.5 555.5"/>
<path d="M842.5 563.5 A5 5 0 0 1 847.5 558.5"/>
</g>
<circle cx="846.5" cy="562.5" r="1" fill="#e8e8e8"/>
<!-- battery plugged -->
<rect x="857.5" y="554" width="12" height="7.5" fill="none" stroke="#e8e8e8" stroke-width="1"/>
<rect x="869.5" y="556" width="1.3" height="3.5" fill="#e8e8e8"/>
<rect x="858.5" y="555" width="10" height="5.5" fill="#e8e8e8"/>
<path d="M855 553 V555.5 M857 553 V555.5 M854.5 555.5 H857.5 V557.5 C857.5 559 855 559 855 557.5 V562" stroke="#e8e8e8" stroke-width="0.9" fill="none"/>
<text x="879.6" y="553.7" font-size="11" fill="#eaeaea" textLength="21.4" lengthAdjust="spacingAndGlyphs">ENG</text>
<text x="884.4" y="570.3" font-size="11" fill="#eaeaea" textLength="11" lengthAdjust="spacingAndGlyphs">ST</text>
<text x="928.2" y="553.7" font-size="11" fill="#eaeaea" textLength="24.8" lengthAdjust="spacingAndGlyphs">10:14</text>
<text x="912.9" y="570.3" font-size="11" fill="#eaeaea" textLength="55.3" lengthAdjust="spacingAndGlyphs">05/09/2025</text>
<!-- notification -->
<path d="M985.3 550.5 H1000.5 V561.5 H995 L992.5 564.5 L990 561.5 H985.3 Z" fill="none" stroke="#e8e8e8" stroke-width="1"/>
<rect x="1019" y="538" width="1" height="38" fill="#8a9094"/>
</svg>
<!--/TASKBAR-->

</body></html>
